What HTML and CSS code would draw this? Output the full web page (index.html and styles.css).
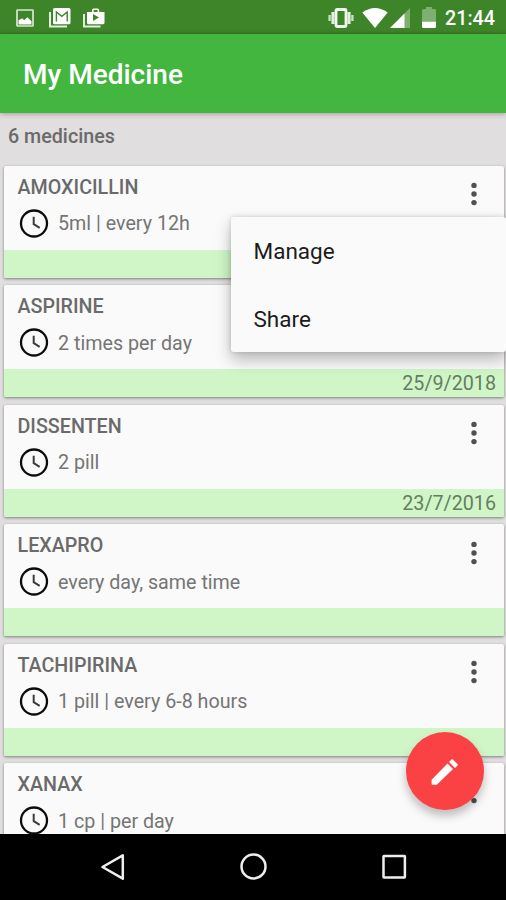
FILE: index.html
```html
<!DOCTYPE html>
<html lang="en">
<head>
    <meta charset="UTF-8">
    <meta name="viewport" content="width=device-width, initial-scale=1.0">
    <title>My Medicine</title>
    <link rel="stylesheet" href="styles.css">
</head>
<body>
    <!-- Shared icons -->
    <svg class="icon-defs" width="0" height="0">
        <symbol id="clock" viewBox="0 0 30 30">
            <circle cx="15" cy="14.500" r="13" fill="none" stroke="#0c0c0c" stroke-width="2.3"/>
            <path d="M14.700 7.800v7.400l6 3.600" fill="none" stroke="#3c3c3c" stroke-width="2"/>
        </symbol>
        <symbol id="dots" viewBox="0 0 6 24">
            <circle cx="3" cy="3.400" r="2.700"/>
            <circle cx="3" cy="12" r="2.700"/>
            <circle cx="3" cy="20.600" r="2.700"/>
        </symbol>
    </svg>

    <div class="phone">
        <div class="status-bar">
            <div class="notifications">
                <svg width="18" height="18" viewBox="0 0 18 18">
                    <rect x="1" y="1" width="16" height="16" rx="0.6" fill="none" stroke="#d9e8d4" stroke-width="1.7"/>
                    <path d="M2.500 15.500v-4.200l3.700-2.100 2 2 3.200-2.900 4.100 4v3.200z" fill="#fff"/>
                </svg>
                <svg width="22" height="20" viewBox="0 0 22 20">
                    <path d="M1 4v14.600h17" fill="none" stroke="#e3efdf" stroke-width="2"/>
                    <rect x="4" y="0" width="17.500" height="16.300" rx="1.600" fill="#fff"/>
                    <path d="M7.400 13.600V4l5.400 4.400L18.200 4v9.600" fill="none" stroke="#3d8528" stroke-width="1.400"/>
                </svg>
                <svg width="22" height="20" viewBox="0 0 22 20">
                    <path d="M1 6v12.600h16.500" fill="none" stroke="#e3efdf" stroke-width="2"/>
                    <path d="M9 4V2q0-1.600 1.600-1.600h4Q16.200 .4 16.200 2v2h5.300v10.700q0 1.600-1.600 1.600H5.600Q4 16.300 4 14.700V4zM10.700 4h3.800V2h-3.800z" fill="#fff" fill-rule="evenodd"/>
                    <path d="M10 6v7l6-3.500z" fill="#3d8528"/>
                </svg>
            </div>
            <div class="system">
                <svg class="vibrate" width="26" height="20" viewBox="0 0 26 20">
                    <rect x="8" y="1.500" width="10" height="17" rx="1" fill="none" stroke="#f2f7f0" stroke-width="2.800"/>
                    <path d="M5 4v12M21 4v12" stroke="#e3efdf" stroke-width="3.200"/>
                    <path d="M1.600 7v6M24.400 7v6" stroke="#c9dec2" stroke-width="2.400"/>
                </svg>
                <svg class="wifi" width="26" height="20" viewBox="0 0 26 20">
                    <path d="M13 20L.3 4.600Q13-4.600 25.700 4.600z" fill="#fff"/>
                </svg>
                <svg class="signal" width="20" height="20" viewBox="0 0 20 20">
                    <path d="M0 20L20 0v20z" fill="#7db06f"/>
                    <path d="M0 20L14.500 5.500V20z" fill="#fff"/>
                </svg>
                <svg class="battery" width="14" height="21" viewBox="0 0 14 21">
                    <path d="M0 3.500Q0 2 1.500 2H4V0h6v2h2.500Q14 2 14 3.500V14H0z" fill="#7db06f"/>
                    <path d="M0 14.500h14v5.300q0 1.200-1.200 1.200H1.200Q0 21 0 19.800z" fill="#fff"/>
                </svg>
                <span class="time">21:44</span>
            </div>
        </div>

        <div class="app-bar">
            <h1>My Medicine</h1>
        </div>

        <div class="content">
            <h2>6 medicines</h2>
            <div class="list">
                <div class="card">
                    <div class="info">
                        <h3>AMOXICILLIN</h3>
                        <p><svg class="clock"><use href="#clock"/></svg>5ml | every 12h</p>
                        <svg class="more"><use href="#dots"/></svg>
                    </div>
                    <div class="date"></div>
                </div>
                <div class="card">
                    <div class="info">
                        <h3>ASPIRINE</h3>
                        <p><svg class="clock"><use href="#clock"/></svg>2 times per day</p>
                        <svg class="more"><use href="#dots"/></svg>
                    </div>
                    <div class="date">25/9/2018</div>
                </div>
                <div class="card">
                    <div class="info">
                        <h3>DISSENTEN</h3>
                        <p><svg class="clock"><use href="#clock"/></svg>2 pill</p>
                        <svg class="more"><use href="#dots"/></svg>
                    </div>
                    <div class="date">23/7/2016</div>
                </div>
                <div class="card">
                    <div class="info">
                        <h3>LEXAPRO</h3>
                        <p><svg class="clock"><use href="#clock"/></svg>every day, same time</p>
                        <svg class="more"><use href="#dots"/></svg>
                    </div>
                    <div class="date"></div>
                </div>
                <div class="card">
                    <div class="info">
                        <h3>TACHIPIRINA</h3>
                        <p><svg class="clock"><use href="#clock"/></svg>1 pill | every 6-8 hours</p>
                        <svg class="more"><use href="#dots"/></svg>
                    </div>
                    <div class="date"></div>
                </div>
                <div class="card">
                    <div class="info">
                        <h3>XANAX</h3>
                        <p><svg class="clock"><use href="#clock"/></svg>1 cp | per day</p>
                        <svg class="more"><use href="#dots"/></svg>
                    </div>
                    <div class="date"></div>
                </div>
            </div>

            <div class="menu">
                <div class="menu-item">Manage</div>
                <div class="menu-item">Share</div>
            </div>

            <button class="fab" aria-label="Edit">
                <svg width="34" height="34" viewBox="0 0 34 34">
                    <path d="M3.600 25.700L19.500 9.500l5.500 5.500L8.800 30.800H4.400q-.8 0-.8-.8z" fill="#fff"/>
                    <path d="M21 8l2.500-2.500q.7-.7 1.400 0l4.600 4.600q.7.700 0 1.400L27 14z" fill="#fff"/>
                </svg>
            </button>
        </div>

        <div class="nav-bar">
            <svg width="28" height="30" viewBox="0 0 28 30">
                <path d="M23.800 3.300v23.400L3.500 15z" fill="none" stroke="#eee" stroke-width="2.500" stroke-linejoin="round"/>
            </svg>
            <svg width="28" height="30" viewBox="0 0 28 30">
                <circle cx="14.500" cy="14.500" r="12" fill="none" stroke="#eee" stroke-width="2.500"/>
            </svg>
            <svg width="28" height="30" viewBox="0 0 28 30">
                <rect x="3.500" y="4" width="21.400" height="21.400" rx="0.500" fill="none" stroke="#eee" stroke-width="2.500"/>
            </svg>
        </div>
    </div>
</body>
</html>
```

FILE: styles.css
```css
* {
    box-sizing: border-box;
}

body {
    font-family: Roboto, "Liberation Sans", sans-serif;
    margin: 0;
    color: #6a6a6a;
}

h1, h2, h3, p {
    margin: 0;
}

.icon-defs {
    display: block;
}

.phone {
    display: flex;
    flex-direction: column;
    width: 506px;
    height: 900px;
    overflow: hidden;
}

/* Status bar */
.status-bar {
    display: flex;
    justify-content: space-between;
    align-items: center;
    height: 34px;
    padding: 1px 11px 0 16px;
    background: linear-gradient(#3d8528 31px, #34781f);
}

.notifications, .system {
    display: flex;
    align-items: center;
}

.notifications {
    gap: 15px;
}

.notifications svg:last-child {
    margin-left: -3px;
}

.wifi {
    margin-left: 8px;
}

.signal {
    margin-left: 2px;
}

.battery {
    margin-left: 12px;
}

.time {
    margin-left: 9px;
    padding-top: 2px;
    color: #fff;
    font-size: 19.7px;
    font-weight: 500;
}

/* Title bar */
.app-bar {
    display: flex;
    align-items: center;
    flex-shrink: 0;
    height: 79px;
    padding: 2px 23px 0;
    background-color: #43b63f;
    box-shadow: 0 1px 5px rgba(90, 40, 70, 0.4);
    z-index: 1;
}

.app-bar h1 {
    color: #fff;
    font-size: 28px;
    font-weight: 500;
}

/* Medicine list */
.content {
    position: relative;
    height: 721px;
    padding: 0 2.5px 0 4px;
    background-color: #e0dedf;
    overflow: hidden;
}

.content h2 {
    height: 52.5px;
    padding-left: 4px;
    font-size: 19.7px;
    font-weight: 500;
    line-height: 47px;
}

.list {
    display: flex;
    flex-direction: column;
    gap: 7.5px;
}

.card {
    height: 112px;
    background-color: #fafafa;
    border-radius: 2px;
    box-shadow: 0 1px 3px rgba(0, 0, 0, 0.45);
    overflow: hidden;
}

.info {
    display: grid;
    grid-template-columns: 1fr 6px;
    grid-template-rows: 42px 42px;
    height: 84px;
    padding: 0 26.5px 0 13.5px;
}

.card h3 {
    font-size: 19.7px;
    font-weight: 500;
    line-height: 43px;
}

.card p {
    grid-column: 1;
    display: flex;
    align-items: center;
    gap: 9px;
    height: 32px;
    padding-left: 1.5px;
    font-size: 19.7px;
    color: #757575;
}

.clock {
    width: 30px;
    height: 30px;
}

.more {
    grid-column: 2;
    grid-row: 1;
    width: 6px;
    height: 24px;
    margin-top: 16.5px;
    fill: #505050;
}

.date {
    height: 28px;
    padding-right: 7.5px;
    background-color: #d0f6c8;
    color: #667d62;
    font-size: 19.7px;
    line-height: 30px;
    text-align: right;
}

/* Popup menu over the first cards */
.menu {
    position: absolute;
    top: 103.5px;
    right: 0;
    width: 275px;
    height: 135.5px;
    background-color: #fafafa;
    border-radius: 3px;
    box-shadow: 0 8px 16px rgba(0, 0, 0, 0.26), 0 0 5px rgba(0, 0, 0, 0.16);
}

.menu-item {
    height: 68px;
    padding-left: 22.5px;
    color: #1c1c1c;
    font-size: 22.5px;
    line-height: 69px;
}

.fab {
    position: absolute;
    right: 22px;
    bottom: 24px;
    display: flex;
    align-items: center;
    justify-content: center;
    width: 78px;
    height: 78px;
    padding: 0;
    border: none;
    border-radius: 50%;
    background-color: #fa4143;
    box-shadow: 0 6px 10px rgba(0, 0, 0, 0.25);
}

/* Navigation buttons */
.nav-bar {
    display: flex;
    justify-content: center;
    align-items: center;
    gap: 112.5px;
    height: 66px;
    background-color: #000;
}
```
